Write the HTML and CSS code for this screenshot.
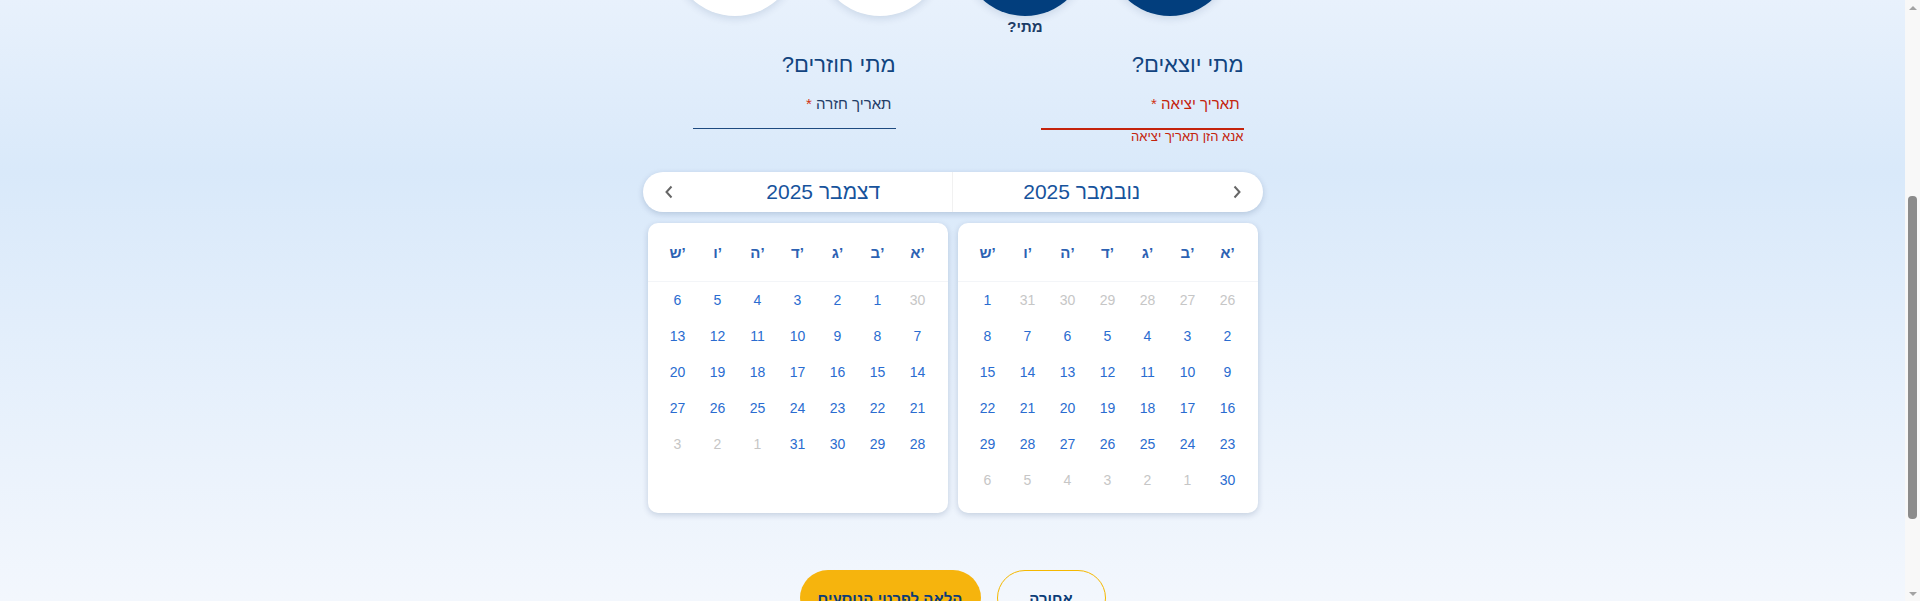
FILE: index.html
```html
<!DOCTYPE html>
<html lang="he" dir="rtl">
<head>
<meta charset="utf-8">
<title>מתי?</title>
<link rel="stylesheet" href="styles.css">
</head>
<body>
<main class="page">
  <div class="stepper">
    <div class="step"><div class="circle done"></div><div class="step-label"></div></div>
    <div class="step"><div class="circle done"></div><div class="step-label">מתי?</div></div>
    <div class="step"><div class="circle"></div><div class="step-label"></div></div>
    <div class="step"><div class="circle"></div><div class="step-label"></div></div>
  </div>

  <div class="dates">
    <div class="col">
      <h2 class="col-title">מתי יוצאים?</h2>
      <div class="field invalid">תאריך יציאה <span class="req">*</span></div>
      <div class="error">אנא הזן תאריך יציאה</div>
    </div>
    <div class="col">
      <h2 class="col-title">מתי חוזרים?</h2>
      <div class="field">תאריך חזרה <span class="req">*</span></div>
    </div>
  </div>

  <div class="monthbar">
    <div class="month">
      <span class="nav"><svg width="10" height="14" viewBox="0 0 10 14"><polyline points="2.5,1.5 7.5,7 2.5,12.5" fill="none" stroke="#666" stroke-width="2"/></svg></span>
      <span class="month-title">נובמבר 2025</span>
    </div>
    <div class="month">
      <span class="month-title">דצמבר 2025</span>
      <span class="nav"><svg width="10" height="14" viewBox="0 0 10 14"><polyline points="7.5,1.5 2.5,7 7.5,12.5" fill="none" stroke="#666" stroke-width="2"/></svg></span>
    </div>
  </div>

  <div class="calendars">
    <div class="card">
      <div class="weekdays"><span>א’</span><span>ב’</span><span>ג’</span><span>ד’</span><span>ה’</span><span>ו’</span><span>ש’</span></div>
      <div class="days">
        <span class="muted">26</span><span class="muted">27</span><span class="muted">28</span><span class="muted">29</span><span class="muted">30</span><span class="muted">31</span><span>1</span>
        <span>2</span><span>3</span><span>4</span><span>5</span><span>6</span><span>7</span><span>8</span>
        <span>9</span><span>10</span><span>11</span><span>12</span><span>13</span><span>14</span><span>15</span>
        <span>16</span><span>17</span><span>18</span><span>19</span><span>20</span><span>21</span><span>22</span>
        <span>23</span><span>24</span><span>25</span><span>26</span><span>27</span><span>28</span><span>29</span>
        <span>30</span><span class="muted">1</span><span class="muted">2</span><span class="muted">3</span><span class="muted">4</span><span class="muted">5</span><span class="muted">6</span>
      </div>
    </div>
    <div class="card">
      <div class="weekdays"><span>א’</span><span>ב’</span><span>ג’</span><span>ד’</span><span>ה’</span><span>ו’</span><span>ש’</span></div>
      <div class="days">
        <span class="muted">30</span><span>1</span><span>2</span><span>3</span><span>4</span><span>5</span><span>6</span>
        <span>7</span><span>8</span><span>9</span><span>10</span><span>11</span><span>12</span><span>13</span>
        <span>14</span><span>15</span><span>16</span><span>17</span><span>18</span><span>19</span><span>20</span>
        <span>21</span><span>22</span><span>23</span><span>24</span><span>25</span><span>26</span><span>27</span>
        <span>28</span><span>29</span><span>30</span><span>31</span><span class="muted">1</span><span class="muted">2</span><span class="muted">3</span>
      </div>
    </div>
  </div>

  <div class="actions">
    <button class="btn btn-back" type="button">אחורה</button>
    <button class="btn btn-next" type="button">הלאה לפרטי הנוסעים</button>
  </div>
</main>

<div class="scrollbar" aria-hidden="true">
  <span class="sb-arrow sb-up"></span>
  <span class="sb-track"><span class="sb-thumb"></span></span>
  <span class="sb-arrow sb-down"></span>
</div>
<script src="script.js"></script>
</body>
</html>
```

FILE: styles.css
```css
* { box-sizing: border-box; margin: 0; padding: 0; }

html {
  direction: rtl;
  background: linear-gradient(180deg, #eef5fd 0px, #e8f1fc 337px, #d9e9fa 510px, #f3f7fd 940px, #f5f9fe 1062px);
}

body {
  min-height: 1062px;
  font-family: "Liberation Sans", Arial, "DejaVu Sans", sans-serif;
}

.page {
  padding-top: 225px;
  padding-right: 15px;
  display: flex;
  flex-direction: column;
  align-items: center;
}

/* stepper */
.stepper { display: flex; gap: 19px; }
.step { width: 126px; display: flex; flex-direction: column; align-items: center; }
.circle {
  width: 126px; height: 126px; border-radius: 50%;
  margin-top: 2px;
  background: #fff;
  box-shadow: 0 2px 8px rgba(0, 40, 90, 0.14);
}
.circle.done { background: #023e7d; }
.step-label {
  margin-top: 2px; height: 18px; line-height: 18px;
  font-size: 15px; font-weight: bold; color: #1c3c66;
}

/* date fields */
.dates {
  width: 620px;
  padding: 0 19px 0 50px;
  margin-top: 14px;
  display: flex;
  justify-content: space-between;
}
.col { width: 203px; }
.col-title {
  font-size: 22px; line-height: 30px; font-weight: normal; color: #12447f;
  white-space: nowrap;
}
.field {
  margin-top: 16px;
  height: 33px;
  padding-right: 4px;
  font-size: 15px; line-height: 16px;
  color: #1f3c66;
  border-bottom: 1px solid #1d4a80;
}
.field.invalid { height: 34px; color: #c4230c; border-bottom: 2px solid #c4230c; }
.req { color: #d0300f; }
.error { font-size: 13px; line-height: 14px; color: #c4230c; }

/* month bar */
.monthbar {
  width: 620px; height: 40px;
  margin-top: 28px;
  background: #fff;
  border-radius: 20px;
  box-shadow: 0 2px 6px rgba(0, 40, 90, 0.18);
  display: flex;
}
.month { flex: 1; display: flex; align-items: center; }
.month + .month { border-right: 1px solid #f1f1f1; }
.nav { width: 52px; height: 40px; display: flex; align-items: center; justify-content: center; }
.month-title { flex: 1; text-align: center; font-size: 21px; color: #17539c; }

/* calendars */
.calendars { width: 610px; margin-top: 11px; display: flex; gap: 10px; }
.card {
  width: 300px; height: 290px;
  padding: 0 10px;
  background: #fff;
  border-radius: 10px;
  box-shadow: 0 2px 6px rgba(0, 40, 90, 0.18);
}
.weekdays {
  display: grid;
  grid-template-columns: repeat(7, 40px);
  align-items: center;
  height: 59px;
  padding: 1px 10px 0;
  margin: 0 -10px;
  border-bottom: 1px solid #f3f5f8;
  font-size: 15px; font-weight: bold; color: #2d62b3;
  text-align: center;
}
.weekdays span { direction: ltr; unicode-bidi: isolate; }
.days {
  display: grid;
  grid-template-columns: repeat(7, 40px);
  grid-auto-rows: 36px;
  align-items: center;
  text-align: center;
  font-size: 14px;
  color: #2a6cd0;
}
.days .muted { color: #c6c6c6; }

/* actions */
.actions { display: flex; gap: 16px; margin-top: 57px; }
.btn {
  height: 56px; border-radius: 28px;
  font-family: inherit; font-size: 15px; font-weight: bold; color: #0b3c78;
  cursor: pointer;
}
.btn-back { width: 109px; background: transparent; border: 1px solid #f5b800; }
.btn-next { width: 181px; background: #f6b40d; border: none; }

/* window scrollbar (browser chrome drawn over the page edge) */
.scrollbar {
  position: fixed;
  top: 0; right: 0;
  width: 15px; height: 100vh;
  background: #f8f8f8;
  display: flex;
  flex-direction: column;
  direction: ltr;
}
.sb-arrow { height: 15px; display: flex; align-items: center; justify-content: center; }
.sb-arrow::before {
  content: "";
  border-left: 4px solid transparent;
  border-right: 4px solid transparent;
}
.sb-up::before { border-bottom: 4px solid #a3a3a3; }
.sb-down::before { border-top: 4px solid #a3a3a3; }
.sb-track { flex: 1; display: flex; flex-direction: column; align-items: center; }
.sb-thumb {
  margin-top: 181px;
  width: 9px; height: 323px;
  border-radius: 4px;
  background: #8b8b8b;
}
```

FILE: script.js
```js
window.scrollTo(0, 337);
window.addEventListener('load', function () { window.scrollTo(0, 337); });
```
